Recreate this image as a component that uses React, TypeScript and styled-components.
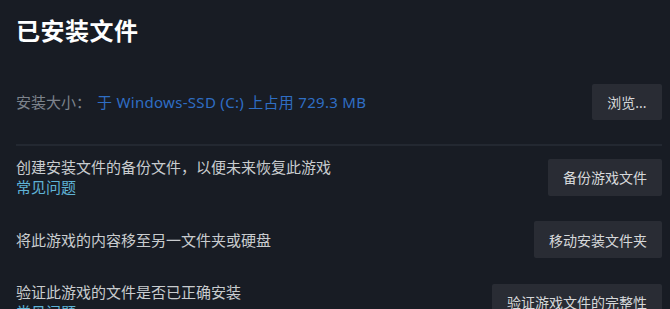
import styled, { createGlobalStyle } from "styled-components";

// ─── Global ───────────────────────────────────────────────────────────────────

const GlobalStyle = createGlobalStyle`
  html, body {
    margin: 0;
    padding: 0;
    background: #181c24;
  }
  body {
    font-family: "Noto Sans", "Noto Sans CJK SC", sans-serif;
    color: #dcdedf;
    overflow: hidden;
  }
`;

// ─── Styled components ────────────────────────────────────────────────────────

const Page = styled.main`
  width: 670px;
  height: 309px;
  box-sizing: border-box;
  padding: 14px 8px 0 16px;
  background: #181c24;
  overflow: hidden;
`;

const Title = styled.h1`
  margin: 0;
  font-size: 24px;
  line-height: 34px;
  font-weight: 700;
  color: #ffffff;
  letter-spacing: 0.5px;
`;

const SizeRow = styled.div`
  display: flex;
  align-items: center;
  justify-content: space-between;
  margin-top: 36px;
  padding-bottom: 24px;
  border-bottom: 2px solid #232831;
`;

const SizeText = styled.div`
  font-size: 15px;
  line-height: 20px;
  display: flex;
  gap: 6px;
`;

const Label = styled.span`
  color: #7d838c;
`;

const Value = styled.span`
  color: #2f6ec4;
  letter-spacing: 0.3px;
`;

const Button = styled.button`
  flex-shrink: 0;
  height: 37px;
  padding: 0 15px;
  border: none;
  border-radius: 2px;
  background: #292c34;
  color: #d6d8da;
  font-family: "Noto Sans", "Noto Sans CJK SC", sans-serif;
  font-size: 14px;
  cursor: pointer;
`;

const BrowseButton = styled(Button)`
  width: 70px;
  height: 36px;
  padding: 0;
`;

const Actions = styled.div`
  display: flex;
  flex-direction: column;
  gap: 24px;
  margin-top: 11px;
`;

const ActionRow = styled.div`
  display: flex;
  align-items: center;
  justify-content: space-between;
  min-height: 37px;
`;

const Info = styled.div`
  font-size: 15px;
  line-height: 20px;
  color: #c9cccf;
`;

const Faq = styled.a`
  display: block;
  color: #5fb3d6;
  font-size: 15px;
  text-decoration: none;
  cursor: pointer;
`;

// ─── Data ─────────────────────────────────────────────────────────────────────

type Action = {
  text: string;
  button: string;
  faq?: boolean;
};

const actions: Action[] = [
  { text: "创建安装文件的备份文件，以便未来恢复此游戏", button: "备份游戏文件", faq: true },
  { text: "将此游戏的内容移至另一文件夹或硬盘", button: "移动安装文件夹" },
  { text: "验证此游戏的文件是否已正确安装", button: "验证游戏文件的完整性", faq: true },
];

// ─── Component ────────────────────────────────────────────────────────────────

export default function App() {
  return (
    <>
      <GlobalStyle />
      <Page>
        <Title>已安装文件</Title>

        <SizeRow>
          <SizeText>
            <Label>安装大小：</Label>
            <Value>于 Windows-SSD (C:) 上占用 729.3 MB</Value>
          </SizeText>
          <BrowseButton>浏览...</BrowseButton>
        </SizeRow>

        <Actions>
          {actions.map((a) => (
            <ActionRow key={a.button}>
              <Info>
                {a.text}
                {a.faq && <Faq>常见问题</Faq>}
              </Info>
              <Button>{a.button}</Button>
            </ActionRow>
          ))}
        </Actions>
      </Page>
    </>
  );
}
